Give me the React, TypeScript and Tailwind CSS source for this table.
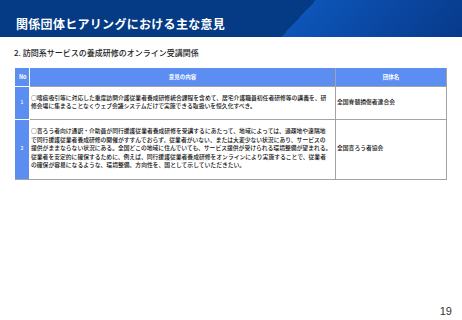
const jp = { fontFamily: "'Noto Sans CJK JP', 'Noto Sans', sans-serif" };

const rows = [
  {
    no: '1',
    h: 'h-[33px]',
    lines: [
      '○喀痰吸引等に対応した重度訪問介護従業者養成研修統合課程を含めて、居宅介護職員初任者研修等の講義を、研',
      '修会場に集まることなくウェブ会議システムだけで実施できる取扱いを恒久化すべき。',
    ],
    org: '全国脊髄損傷者連合会',
  },
  {
    no: '2',
    h: 'h-[59px]',
    lines: [
      '○盲ろう者向け通訳・介助員が同行援護従業者養成研修を受講するにあたって、地域によっては、過疎地や遠隔地',
      'で同行援護従業者養成研修の開催がすすんでおらず、従業者がいない、または大変少ない状況にあり、サービスの',
      '提供がままならない状況にある。全国どこの地域に住んでいても、サービス提供が受けられる環境整備が望まれる。',
      '従業者を安定的に確保するために、例えば、同行援護従業者養成研修をオンラインにより実施することで、従業者',
      'の確保が容易になるような、環境整備、方向性を、国として示していただきたい。',
    ],
    org: '全国盲ろう者協会',
  },
];

export default function App() {
  return (
    <div className="w-[462px] h-[320px] bg-white flex flex-col overflow-hidden" style={jp}>
      {/* Header */}
      <div className="h-[37px] shrink-0 flex items-start pl-[16px] bg-[linear-gradient(133deg,#053b85_231px,#0d55b8_231px,#07398a_100%)]">
        <h1 className="mt-[17px] text-[12px] leading-[14px] font-bold tracking-[0.3px] text-white">
          関係団体ヒアリングにおける主な意見
        </h1>
      </div>

      {/* Subtitle */}
      <p className="mt-[10px] pl-[14px] text-[8px] leading-[12px] font-medium text-[#222]">
        2. 訪問系サービスの養成研修のオンライン受講関係
      </p>

      {/* Table */}
      <div className="mt-[9px] ml-[15px] w-[432px] border-r border-b border-[#a3a3a3] text-[5.8px] leading-[8.5px] font-medium">
        <div className="flex h-[19px] bg-[#5b8ef0] text-white font-bold text-[5.5px]">
          <div className="w-[15px] flex items-center pl-[4px] border-r border-b border-white">No</div>
          <div className="w-[306px] flex items-center justify-center border-r border-b border-[#a3a3a3]">意見の内容</div>
          <div className="flex-1 flex items-center justify-center border-b border-[#a3a3a3]">団体名</div>
        </div>
        {rows.map((r, i) => (
          <div key={r.no} className={`flex ${r.h}`}>
            <div
              className={`w-[15px] bg-[#5b8ef0] text-white text-[5px] flex items-center justify-center pb-[2px] border-r border-white ${
                i < rows.length - 1 ? 'border-b' : ''
              }`}
            >
              {r.no}
            </div>
            <div
              className={`w-[306px] overflow-hidden flex flex-col justify-center pb-[2px] pl-[1px] text-[#111] border-r border-[#a3a3a3] ${
                i < rows.length - 1 ? 'border-b' : ''
              }`}
            >
              {r.lines.map((l) => (
                <span key={l} className="whitespace-nowrap">
                  {l}
                </span>
              ))}
            </div>
            <div
              className={`flex-1 flex items-center pl-[1px] pb-[2px] text-[#111] border-[#a3a3a3] ${
                i < rows.length - 1 ? 'border-b' : ''
              }`}
            >
              {r.org}
            </div>
          </div>
        ))}
      </div>

      {/* Page number */}
      <div
        className="mt-auto self-end pr-[10px] pb-[3px] text-[11px] leading-[12px] text-[#333]"
        style={{ fontFamily: "'Liberation Sans', Arial, sans-serif" }}
      >
        19
      </div>
    </div>
  );
}
